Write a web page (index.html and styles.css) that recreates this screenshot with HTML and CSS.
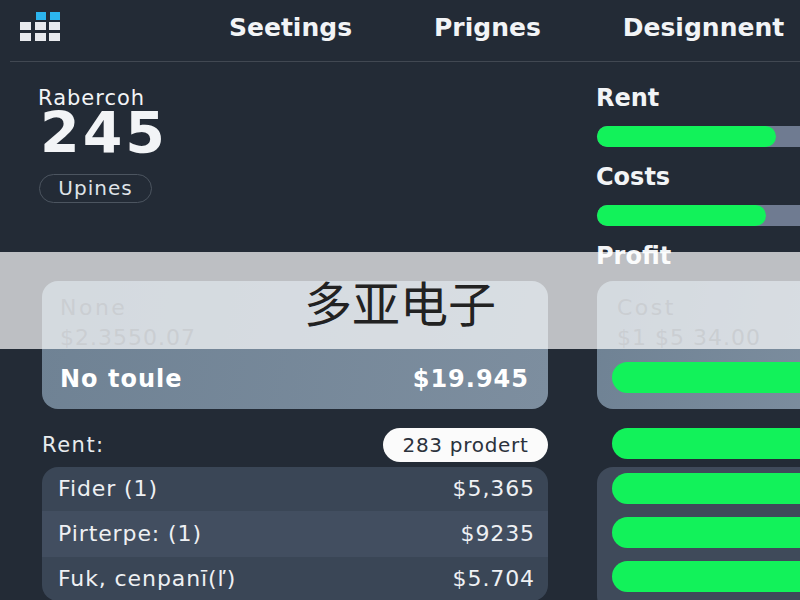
FILE: index.html
```html
<!DOCTYPE html>
<html lang="zh">
<head>
  <meta charset="UTF-8" />
  <title>多亚电子</title>
  <link rel="stylesheet" href="styles.css">
</head>
<body>

<header class="topbar">
  <svg class="logo" width="41" height="30" viewBox="0 0 41 30">
    <rect x="16" y="0" width="10" height="8" fill="#2cb5ee"/>
    <rect x="30" y="0" width="10" height="8" fill="#2cb5ee"/>
    <rect x="0" y="10" width="11" height="8" fill="#e8eaee"/>
    <rect x="15" y="10" width="11" height="8" fill="#e8eaee"/>
    <rect x="29" y="10" width="11" height="8" fill="#e8eaee"/>
    <rect x="0" y="21" width="11" height="8" fill="#e8eaee"/>
    <rect x="15" y="21" width="11" height="8" fill="#e8eaee"/>
    <rect x="29" y="21" width="11" height="8" fill="#e8eaee"/>
  </svg>
  <nav class="nav">
    <a>Seetings</a>
    <a>Prignes</a>
    <a>Designnent</a>
  </nav>
</header>

<main class="layout">
  <section class="left">
    <div class="summary">
      <div class="summary-label">Rabercoh</div>
      <div class="summary-value">245</div>
      <span class="tag">Upines</span>
    </div>

    <div class="card">
      <div class="card-top">
        <div class="muted-head">None</div>
        <div class="muted">$2.3550.07</div>
      </div>
      <div class="card-total">
        <span>No toule</span>
        <span>$19.945</span>
      </div>
    </div>

    <div class="list-head">
      <span class="list-title">Rent:</span>
      <span class="pill">283 prodert</span>
    </div>

    <div class="list">
      <div class="list-row"><span>Fider (1)</span><span>$5,365</span></div>
      <div class="list-row alt"><span>Pirterpe: (1)</span><span>$9235</span></div>
      <div class="list-row"><span>Fuk, cenpanī(ľ)</span><span>$5.704</span></div>
    </div>
  </section>

  <section class="right">
    <div class="meter-label">Rent</div>
    <div class="track"><div class="fill fill-rent"></div></div>
    <div class="meter-label">Costs</div>
    <div class="track"><div class="fill fill-costs"></div></div>
    <div class="meter-label">Profit</div>

    <div class="card card-cost">
      <div class="card-top">
        <div class="muted-head">Cost</div>
        <div class="muted">$1 $5 34.00</div>
      </div>
      <div class="card-bar"><div class="bar"></div></div>
    </div>

    <div class="lone-bar"><div class="bar"></div></div>

    <div class="bar-list">
      <div class="bar"></div>
      <div class="bar"></div>
      <div class="bar"></div>
    </div>
  </section>
</main>

<div class="banner">多亚电子</div>

</body>
</html>
```

FILE: styles.css
```css
body {
  margin: 0;
  height: 600px;
  overflow: hidden;
  position: relative;
  background: #232b36;
  color: #f2f4f6;
  font-family: "DejaVu Sans", sans-serif;
}

.topbar {
  display: flex;
  align-items: center;
  height: 61px;
  margin-left: 10px;
  padding-left: 10px;
  border-bottom: 1px solid #414852;
}

.logo {
  margin-top: -7px;
  flex-shrink: 0;
}

.nav {
  display: flex;
  gap: 82px;
  margin-left: 168px;
  margin-top: -6px;
  font-size: 25px;
  font-weight: bold;
  white-space: nowrap;
}

.layout {
  display: grid;
  grid-template-columns: 510px 240px;
  column-gap: 49px;
  padding-left: 38px;
}

.summary {
  height: 219px;
  box-sizing: border-box;
  padding-top: 25px;
}

.summary-label {
  font-size: 21px;
  line-height: 22px;
  letter-spacing: 1px;
}

.summary-value {
  font-size: 57px;
  font-weight: bold;
  line-height: 48px;
  letter-spacing: 3px;
  margin-left: 2px;
}

.tag {
  display: inline-block;
  margin-top: 17px;
  margin-left: 1px;
  width: 113px;
  height: 29px;
  box-sizing: border-box;
  border: 1px solid #4c5560;
  border-radius: 15px;
  font-size: 20px;
  line-height: 26px;
  letter-spacing: 1px;
  text-align: center;
  color: #dfe3e8;
}

.left .card {
  margin-left: 4px;
}

.card {
  height: 128px;
  border-radius: 16px;
  background: linear-gradient(100deg, #6f8294, #7d8e9f);
  overflow: hidden;
}

.card-top {
  height: 68px;
  box-sizing: border-box;
  padding: 12px 18px 0;
}

.card-cost .card-top {
  padding-left: 20px;
}

.muted-head {
  font-size: 22px;
  line-height: 30px;
  letter-spacing: 2.5px;
  color: #4f5a68;
}

.muted {
  font-size: 22px;
  line-height: 30px;
  letter-spacing: 1px;
  color: #4f5a68;
}

.card-total {
  display: flex;
  justify-content: space-between;
  align-items: center;
  height: 60px;
  padding: 0 19px 0 18px;
  font-size: 24px;
  font-weight: bold;
  letter-spacing: 1px;
  color: #fff;
}

.list-head {
  display: flex;
  justify-content: space-between;
  align-items: center;
  height: 34px;
  margin: 19px 0 5px 4px;
}

.list-title {
  font-size: 21px;
  letter-spacing: 1.5px;
  color: #e8ebee;
}

.pill {
  width: 165px;
  height: 34px;
  border-radius: 17px;
  background: #fbfbfb;
  color: #2b323c;
  font-size: 20px;
  line-height: 34px;
  letter-spacing: 0.7px;
  text-align: center;
}

.list {
  margin-left: 4px;
  border-radius: 16px;
  overflow: hidden;
  color: #eef0f3;
  font-size: 22px;
  letter-spacing: 0.9px;
}

.list-row {
  display: flex;
  justify-content: space-between;
  align-items: center;
  height: 44px;
  box-sizing: border-box;
  padding: 0 13px 2px 16px;
  background: #3a4656;
}

.list-row.alt {
  height: 46px;
  background: #424e60;
}

.meter-label {
  font-size: 24px;
  font-weight: bold;
  line-height: 26px;
  margin-top: 17px;
  margin-left: -1px;
}

.right .meter-label:first-child {
  margin-top: 23px;
}

.right .meter-label + .card {
  margin-top: 12px;
}

.track {
  height: 21px;
  margin-top: 15px;
  border-radius: 11px;
  background: #6f7b91;
}

.fill {
  height: 100%;
  border-radius: 11px;
  background: #12f25a;
}

.fill-rent {
  width: 179px;
}

.fill-costs {
  width: 169px;
}

.card-bar {
  padding: 13px 0 0 15px;
}

.bar {
  height: 31px;
  border-radius: 16px;
  background: #12f25a;
}

.lone-bar {
  padding: 19px 0 0 15px;
}

.bar-list {
  display: flex;
  flex-direction: column;
  gap: 13px;
  margin-top: 8px;
  padding: 6px 0 20px 15px;
  border-radius: 16px;
  background: #3f4a5a;
}

.banner {
  position: absolute;
  top: 252px;
  left: 0;
  right: 0;
  height: 97px;
  display: flex;
  align-items: center;
  justify-content: center;
  background: rgba(255, 255, 255, 0.7);
  color: #222;
  font-family: "Noto Sans CJK SC", sans-serif;
  font-size: 48px;
}
```
